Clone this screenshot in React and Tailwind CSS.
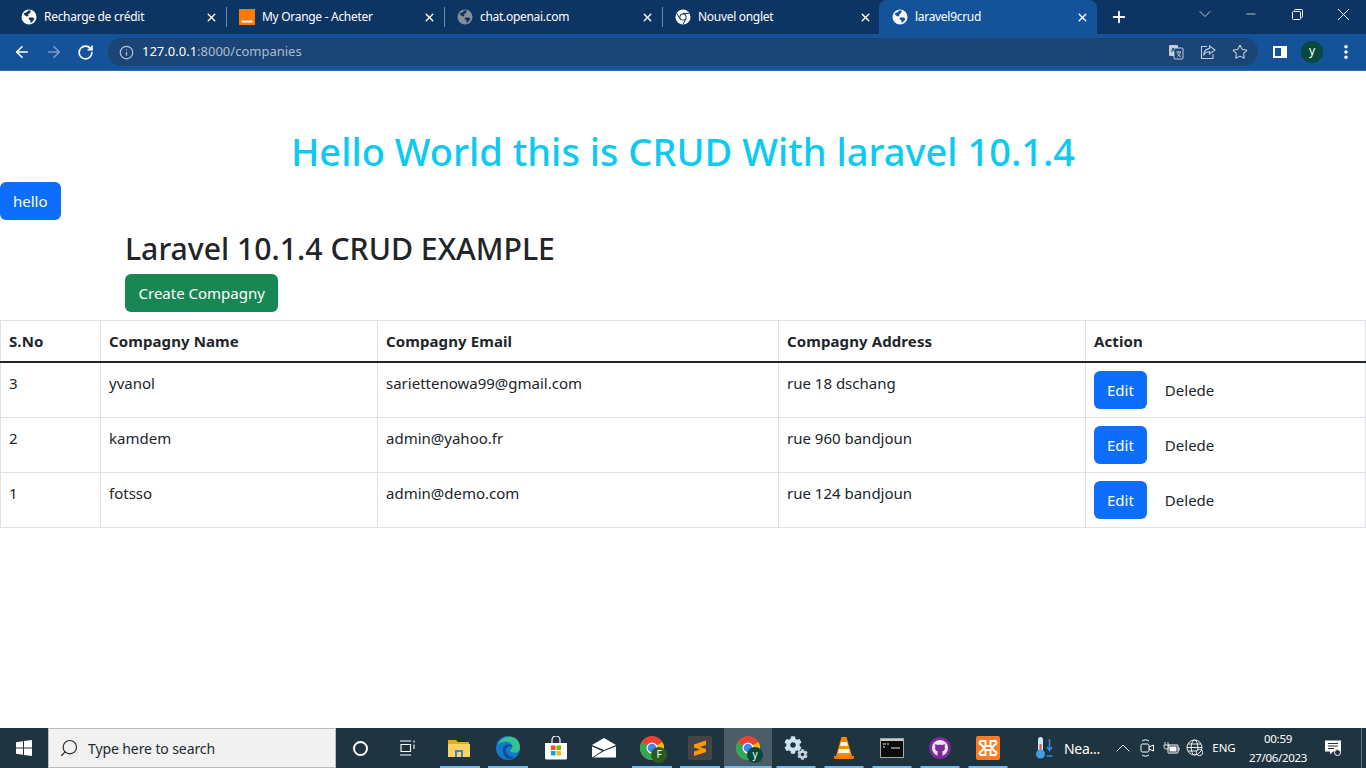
import { ArrowLeft, ArrowRight, RotateCw, Info, Star, X, Plus, ChevronDown, ChevronUp, Minus, EllipsisVertical, Search } from "lucide-react";
import { FaCog } from "react-icons/fa";

const font = "font-['Noto_Sans','Open_Sans',sans-serif]";

const Globe = ({ color = "#ffffff", hole = "#0d3563" }) => (
    <svg width="16" height="16" viewBox="0 0 16 16" className="shrink-0">
        <circle cx="8" cy="8" r="7.5" fill={color} />
        <path d="M2.5 4.5 L6 3 L7 1.5 L10 1.5 L9 4 L7 5.5 L7.5 7 L5.5 7.5 L3.5 6 Z" fill={hole} />
        <path d="M8 8.5 L12 8.5 L13.5 10 L11 13 L9.5 14.2 L9.5 11.5 L7.5 10 Z" fill={hole} />
    </svg>
);

const OrangeIcon = () => (
    <svg width="16" height="16" viewBox="0 0 16 16" className="shrink-0">
        <rect width="16" height="16" fill="#ff7900" />
        <rect x="2.5" y="11.5" width="11" height="2" fill="#ffffff" />
    </svg>
);

const ChromeMono = () => (
    <svg width="16" height="16" viewBox="0 0 16 16" className="shrink-0">
        <circle cx="8" cy="8" r="7.5" fill="#ffffff" />
        <circle cx="8" cy="8" r="3.6" fill="#0d3563" />
        <circle cx="8" cy="8" r="2.6" fill="#ffffff" />
        <path d="M8 4.4 L14.2 4.4 M4.9 9.8 L1.8 4.4 M11.1 9.8 L8 15.2" stroke="#0d3563" strokeWidth="1" />
    </svg>
);

const tabs = [
    { title: "Recharge de crédit", icon: <Globe /> },
    { title: "My Orange - Acheter", icon: <OrangeIcon /> },
    { title: "chat.openai.com", icon: <Globe color="#8a8f96" /> },
    { title: "Nouvel onglet", icon: <ChromeMono /> },
    { title: "laravel9crud", icon: <Globe hole="#14539a" />, active: true },
];

const companies = [
    { id: 3, name: "yvanol", email: "sariettenowa99@gmail.com", address: "rue 18 dschang" },
    { id: 2, name: "kamdem", email: "admin@yahoo.fr", address: "rue 960 bandjoun" },
    { id: 1, name: "fotsso", email: "admin@demo.com", address: "rue 124 bandjoun" },
];

const TabStrip = () => (
    <div className="h-[34px] bg-[#0d3563] flex pl-2 text-white">
        {tabs.map((tab, i) => (
            <div
                key={tab.title}
                className={`w-[218px] h-full flex items-center pl-[13px] pr-[7px] relative ${tab.active ? "bg-[#14539a] rounded-t-lg -ml-px" : ""}`}
            >
                {tab.icon}
                <span className="ml-[7px] text-[12px] tracking-[-0.3px] flex-1 truncate">{tab.title}</span>
                <X size={13} strokeWidth={2.6} className="shrink-0 mr-[1px]" />
                {i < 3 && <span className="absolute right-[-1px] top-[7px] h-[20px] w-px bg-[#6f8aa8]" />}
            </div>
        ))}
        <div className="w-11 flex items-center justify-center">
            <Plus size={18} strokeWidth={2.4} />
        </div>
        <div className="flex-1 flex justify-end items-start text-white">
            <div className="w-[46px] h-7 flex items-center justify-center"><ChevronDown size={20} strokeWidth={0.9} /></div>
            <div className="w-[46px] h-7 flex items-center justify-center"><Minus size={14} strokeWidth={1.2} /></div>
            <div className="w-[46px] h-7 flex items-center justify-center">
                <svg width="11" height="11" viewBox="0 0 11 11" fill="none" stroke="#fff">
                    <rect x="0.5" y="2.5" width="8" height="8" rx="1" />
                    <path d="M2.5 2.5 V1.5 a1 1 0 0 1 1 -1 H9.5 a1 1 0 0 1 1 1 V7.5 a1 1 0 0 1 -1 1 H8.5" />
                </svg>
            </div>
            <div className="w-[46px] h-7 flex items-center justify-center">
                <svg width="11" height="11" viewBox="0 0 11 11" stroke="#fff"><path d="M0 0 L11 11 M11 0 L0 11" /></svg>
            </div>
        </div>
    </div>
);

const Toolbar = () => (
    <div className="h-[37px] bg-[#14539a] flex pb-[4px] pt-1 text-white border-b border-[#2a6db5]">
        <div className="w-[108px] flex items-center pl-[13px] gap-[14px]">
            <ArrowLeft size={18} strokeWidth={2.2} />
            <ArrowRight size={18} strokeWidth={2.2} className="text-[#7f9fc6]" />
            <RotateCw size={17} strokeWidth={2.4} />
        </div>
        <div className="w-[1150px] bg-[#1a4576] rounded-full flex items-center pl-[11px] pr-[10px]">
            <Info size={15} className="text-[#b9c6d6]" />
            <span className="ml-[8px] text-[13px]">
                127.0.0.1<span className="text-[#aebccd]">:8000/companies</span>
            </span>
            <div className="ml-auto flex items-center gap-4 text-[#c3ccd7]">
                <svg width="16" height="16" viewBox="0 0 16 16">
                    <rect x="1" y="1" width="9" height="11" rx="1" fill="#c3ccd7" />
                    <rect x="6" y="4" width="9" height="11" rx="1" fill="#1a4576" stroke="#c3ccd7" />
                    <path d="M3.5 8 L5 4 L6.5 8" stroke="#1a4576" fill="none" />
                    <path d="M8.5 8 H13 M10.500 7 V8 M9.500 12.500 C11 11.500 12 10 12.500 8 M9.500 9 C10 10.500 11 12 13 12.500" stroke="#c3ccd7" fill="none" />
                </svg>
                <svg width="16" height="16" viewBox="0 0 16 16" fill="none" stroke="currentColor" strokeWidth="1.1">
                    <path d="M7 2.500 H1.500 V14.500 H13 V10" />
                    <path d="M9.500 2 L15 6 L9.500 10 V7.700 C7 7.700 5 8.500 3.500 11.500 C4 7.500 6.500 4.800 9.500 4.400 Z" />
                </svg>
                <Star size={16} strokeWidth={1.6} />
            </div>
        </div>
        <div className="flex-1 flex items-center pl-[15px] gap-[14px]">
            <svg width="14" height="14" viewBox="0 0 14 14">
                <rect x="0" y="1" width="14" height="12" fill="#fff" />
                <rect x="2" y="3" width="6" height="8" fill="#14539a" />
            </svg>
            <div className="w-[22px] h-[22px] rounded-full bg-[#064a3d] flex items-center justify-center text-[12px] leading-none pb-[3px]">y</div>
            <EllipsisVertical size={18} strokeWidth={2.8} />
        </div>
    </div>
);

const TaskIcons = [
    {
        key: "explorer",
        line: "w-[40px]",
        el: (
            <svg width="24" height="22" viewBox="0 0 24 22" className="-ml-[2px]">
                <path d="M1 3 H9 L11 5 H22 V8 H1 Z" fill="#e5a823" />
                <rect x="1" y="7" width="22" height="13" fill="#fdd261" />
                <rect x="8" y="13" width="8" height="7" fill="#2f88d0" />
                <rect x="10" y="15" width="4" height="5" fill="#fdd261" />
            </svg>
        ),
    },
    {
        key: "edge",
        line: "w-[40px]",
        el: (
            <svg width="24" height="24" viewBox="0 0 24 24">
                <circle cx="12" cy="12" r="12" fill="#1379c9" />
                <path d="M2 9 C4 1 13 -1 19 2 C24 5 25 11 23 15 C20 18 15 17 14 14 C18 12 17 7 12 6 C7 5 3 7 2 9 Z" fill="#35c38f" />
                <path d="M7 13 C7 8 15 7 16.500 11 C15 10 11 10 10 13 C9 17 13 21 18 21 C12 26 6 20 7 13 Z" fill="#0c4f9a" />
            </svg>
        ),
    },
    {
        key: "store",
        line: "",
        el: (
            <svg width="24" height="24" viewBox="0 0 24 24">
                <path d="M8 7 V4 a4 4 0 0 1 8 0 V7" fill="none" stroke="#fff" strokeWidth="1.200" />
                <path d="M1 7 H23 V22 a1.500 1.500 0 0 1 -1.500 1.500 H2.500 A1.500 1.500 0 0 1 1 22 Z" fill="#fff" />
                <rect x="7" y="9.500" width="4.500" height="4.500" fill="#f25022" />
                <rect x="12.500" y="9.500" width="4.500" height="4.500" fill="#7fba00" />
                <rect x="7" y="15" width="4.500" height="4.500" fill="#00a4ef" />
                <rect x="12.500" y="15" width="4.500" height="4.500" fill="#ffb900" />
            </svg>
        ),
    },
    {
        key: "mail",
        line: "",
        el: (
            <svg width="24" height="20" viewBox="0 0 24 20">
                <path d="M0 7 L12 0 L24 7 L12 12 Z" fill="#fff" />
                <path d="M0 8.500 L10 13 L0 19.500 Z M24 8.500 V19.500 H1.500 L12 13 Z" fill="#fff" />
            </svg>
        ),
    },
    { key: "chromeF", line: "w-[40px]", el: <ChromeBadge letter="F" badge="#2a5d1c" /> },
    {
        key: "sublime",
        line: "w-[40px]",
        el: (
            <svg width="24" height="24" viewBox="0 0 24 24">
                <rect width="24" height="24" rx="2" fill="#454545" />
                <path d="M6 8.500 L18 4.500 V9 L12 11 L18 13 V16 L6 20 V15.500 L12 13.500 L6 11.500 Z" fill="#ff9800" />
            </svg>
        ),
    },
    { key: "chromeY", line: "w-[47px]", active: true, el: <ChromeBadge letter="y" badge="#064a3d" /> },
    {
        key: "gears",
        line: "w-[39px]",
        el: (
            <div className="relative w-6 h-6">
                <FaCog size={18} className="absolute left-0 top-0 text-[#cfe2f1]" />
                <FaCog size={11} className="absolute right-0 bottom-0 text-[#c4d2dc]" />
            </div>
        ),
    },
    {
        key: "vlc",
        line: "w-[39px]",
        el: (
            <svg width="22" height="24" viewBox="0 0 22 24">
                <path d="M8.500 1 H13.500 L19 20 H3 Z" fill="#ff8800" />
                <path d="M8 6 H14 L15 10 H7 Z M6 13 H16 L17 17 H5 Z" fill="#f4f4f4" />
                <path d="M1 20 H21 V21.500 A1.500 1.500 0 0 1 19.500 23 H2.500 A1.500 1.500 0 0 1 1 21.500 Z" fill="#f57c00" />
            </svg>
        ),
    },
    {
        key: "cmd",
        line: "w-[39px]",
        el: (
            <svg width="24" height="20" viewBox="0 0 24 20">
                <rect x="0.500" y="0.500" width="23" height="19" fill="#0c0c0c" stroke="#a8a8a8" />
                <rect x="1" y="1" width="22" height="2" fill="#c9c9c9" />
                <path d="M3 6 H6 M7 6 H9 M3 9 H5 M11 10 H20" stroke="#e8e8e8" />
            </svg>
        ),
    },
    {
        key: "github",
        line: "w-[39px]",
        el: (
            <svg width="24" height="24" viewBox="0 0 24 24">
                <circle cx="12" cy="12" r="11" fill="#7b2a9a" />
                <circle cx="12" cy="12" r="8" fill="#f0e6f4" />
                <path d="M7.500 8 L9.500 9 C11 8.600 13 8.600 14.500 9 L16.500 8 C17 9 17 10 16.700 10.700 C17.500 13 16.500 15 14 15.500 C14.500 16 14.600 17 14.500 20 H9.500 C9.400 17 9.500 16 10 15.500 C7.500 15 6.500 13 7.300 10.700 C7 10 7 9 7.500 8 Z" fill="#7b2a9a" />
            </svg>
        ),
    },
    {
        key: "xampp",
        line: "w-[39px]",
        el: (
            <svg width="24" height="24" viewBox="0 0 24 24">
                <rect width="24" height="24" rx="2" fill="#fb7a24" />
                <path d="M6 5 H9.500 V10 H14.500 V5 H18 A1.500 1.500 0 0 1 19 8.500 L15.500 12 L19 15.500 A1.500 1.500 0 0 1 18 19 H14.500 V14 H9.500 V19 H6 A1.500 1.500 0 0 1 5 15.500 L8.500 12 L5 8.500 A1.500 1.500 0 0 1 6 5 Z" fill="none" stroke="#fff" strokeWidth="2" />
            </svg>
        ),
    },
];

function ChromeBadge({ letter, badge }) {
    return (
        <div className="relative w-6 h-6">
            <svg width="24" height="24" viewBox="0 0 24 24">
                <circle cx="12" cy="12" r="12" fill="#ea4335" />
                <path d="M12 12 L1.600 6 A12 12 0 0 0 12 24 Z" fill="#34a853" />
                <path d="M12 12 L12 24 A12 12 0 0 0 22.400 6 Z" fill="#fbbc05" />
                <circle cx="12" cy="12" r="5.500" fill="#fff" />
                <circle cx="12" cy="12" r="4.300" fill="#4285f4" />
            </svg>
            <span className="absolute -right-[3px] -bottom-[3px] w-[16px] h-[16px] rounded-full text-white text-[10px] leading-[15px] text-center" style={{ background: badge }}>{letter}</span>
        </div>
    );
}

const Taskbar = () => (
    <div className="h-10 bg-[#1f3441] flex text-white shrink-0">
        <div className="w-12 flex items-center justify-center">
            <svg width="16" height="16" viewBox="0 0 16 16" fill="#fff">
                <path d="M0 2.300 L7 1.300 V7.500 H0 Z M8 1.100 L16 0 V7.500 H8 Z M0 8.500 H7 V14.700 L0 13.700 Z M8 8.500 H16 V16 L8 14.900 Z" />
            </svg>
        </div>
        <div className="w-[288px] bg-[#f1f1f1] border border-[#b9bdc0] flex items-center pl-[10px] text-[#1d2a33]">
            <Search size={20} strokeWidth={1.4} className="-scale-x-100" />
            <span className="ml-[9px] text-[14px] tracking-[-0.1px]">Type here to search</span>
        </div>
        <div className="w-12 flex items-center justify-center">
            <span className="w-[15px] h-[15px] rounded-full border-2 border-white" />
        </div>
        <div className="w-[52px] flex items-center justify-center pr-1">
            <svg width="16" height="16" viewBox="0 0 16 16" fill="none" stroke="#fff" strokeWidth="1.100">
                <path d="M0 1 H11 M0 15 H11 M1 4.500 H10.500 V11.500 H1 Z M14 0.500 V2.500 M14 4.500 V9" />
            </svg>
        </div>
        {TaskIcons.map((item) => (
            <div key={item.key} className={`w-12 relative flex items-center justify-center ${item.active ? "bg-[#4a5c66]" : ""}`}>
                {item.el}
                {item.line && <span className={`absolute bottom-0 left-1/2 -translate-x-1/2 h-[2px] bg-[#76b9ed] ${item.line}`} />}
            </div>
        ))}
        <div className="w-[23px]" />
        <div className="flex items-center w-[76px]">
            <svg width="18" height="24" viewBox="0 0 17 24" className="shrink-0">
                <rect x="2.500" y="1" width="5" height="15" rx="2.500" fill="#cfe6f7" />
                <rect x="4" y="8" width="2" height="9" fill="#e8553d" />
                <circle cx="5" cy="18" r="4.500" fill="#3f9fe0" />
                <path d="M14 3 V14 M11.500 11 L14 14.500 L16.500 11 M11 20 H17" stroke="#2d8fe0" strokeWidth="1.500" fill="none" />
            </svg>
            <span className="ml-[11px] text-[14px] tracking-[-0.3px] whitespace-nowrap">Nea...</span>
        </div>
        <div className="w-6 flex items-center justify-center"><ChevronUp size={24} strokeWidth={1} /></div>
        <div className="w-6 flex items-center justify-center">
            <svg width="15" height="18" viewBox="0 0 15 18" fill="none" stroke="#fff">
                <rect x="1" y="5" width="8" height="8" rx="1.500" />
                <path d="M9 8 L13.500 6 V12 L9 10 M2 2 C4 0.500 7 0.500 9 2 M2 16 C4 17.500 7 17.500 9 16" />
            </svg>
        </div>
        <div className="w-6 flex items-center justify-center">
            <svg width="17" height="14" viewBox="0 0 17 14" fill="#fff">
                <path d="M2 1 V4 M5 1 V4 M1 4 H6 V6 A2 2 0 0 1 4 8 H3 A2 2 0 0 1 1 6 Z" stroke="#fff" strokeWidth="0.800" fill="none" />
                <rect x="5" y="4" width="10" height="8" rx="0.500" fill="none" stroke="#fff" />
                <rect x="6.500" y="5.500" width="7" height="5" />
                <rect x="15.500" y="6.500" width="1" height="3" />
            </svg>
        </div>
        <div className="w-6 flex items-center justify-center">
            <svg width="18" height="18" viewBox="0 0 18 18" fill="none" stroke="#fff" strokeWidth="0.900">
                <circle cx="8.500" cy="8.500" r="7.500" />
                <ellipse cx="8.500" cy="8.500" rx="3.300" ry="7.500" />
                <path d="M1 8.500 H16 M2 5 H15 M2 12 H15" />
                <circle cx="13.500" cy="13.500" r="3.200" fill="#1f3441" />
                <path d="M11.300 15.700 L15.700 11.300" />
            </svg>
        </div>
        <div className="w-[34px] flex items-center justify-center text-[11.5px]">ENG</div>
        <div className="w-[74px] flex flex-col items-center justify-center text-[11.5px] leading-[19px] tracking-[-0.3px] pb-px">
            <span>00:59</span>
            <span>27/06/2023</span>
        </div>
        <div className="w-9 flex items-center justify-center">
            <svg width="16" height="16" viewBox="0 0 16 16">
                <path d="M0 0.500 H16 V11.500 H8 L5 14.500 V11.500 H0 Z" fill="#fff" />
                <path d="M3 3.500 H13 M3 6 H13 M3 8.500 H9" stroke="#1f3441" />
                <circle cx="12.500" cy="12.500" r="3" fill="#1f3441" stroke="#fff" />
            </svg>
        </div>
        <div className="flex-1 border-l border-[#5d6e79] ml-[10px]" />
    </div>
);

const Page = () => (
    <div className={`flex-1 bg-white text-[#212529] text-[15px] ${font}`}>
        <h1 className="pt-[56px] text-center text-[38px] leading-[48px] font-medium text-[#0dcaf0]">
            Hello World this is CRUD With laravel 10.1.4
        </h1>
        <button className="mt-[7px] block h-[38px] px-[13px] bg-[#0d6efd] text-white rounded-md">hello</button>
        <div className="pl-[125px] mt-[8px]">
            <h2 className="text-[30.2px] leading-[42px] font-medium">Laravel 10.1.4 CRUD EXAMPLE</h2>
            <button className="mt-[4px] block h-[38px] px-[13.5px] bg-[#198754] text-white rounded-md">Create Compagny</button>
        </div>
        <table className="mt-2 w-full table-fixed border-collapse border border-[#dee2e6]">
            <colgroup>
                <col className="w-[100px]" />
                <col className="w-[277px]" />
                <col className="w-[401px]" />
                <col className="w-[307px]" />
                <col />
            </colgroup>
            <thead>
                <tr className="h-[41px] border-b-2 border-b-[#212529]">
                    {["S.No", "Compagny Name", "Compagny Email", "Compagny Address", "Action"].map((h) => (
                        <th key={h} className="border-x border-[#dee2e6] px-2 text-left font-bold tracking-[0.1px]">{h}</th>
                    ))}
                </tr>
            </thead>
            <tbody>
                {companies.map((c, i) => (
                    <tr key={c.id} className={`border-b border-[#dee2e6] ${i === 0 ? "h-[56px]" : "h-[55px]"}`}>
                        <td className="border-x border-[#dee2e6] px-2 pt-2 leading-6 align-top">{c.id}</td>
                        <td className="border-x border-[#dee2e6] px-2 pt-2 leading-6 align-top">{c.name}</td>
                        <td className="border-x border-[#dee2e6] px-2 pt-2 leading-6 align-top">{c.email}</td>
                        <td className="border-x border-[#dee2e6] px-2 pt-2 leading-6 align-top">{c.address}</td>
                        <td className="border-x border-[#dee2e6] px-2 align-middle">
                            <div className="flex items-center">
                                <button className="h-[38px] px-[13px] bg-[#0d6efd] text-white rounded-md">Edit</button>
                                <button className="h-[38px] px-[13px] ml-[5px]">Delede</button>
                            </div>
                        </td>
                    </tr>
                ))}
            </tbody>
        </table>
    </div>
);

const App = () => {
    return (
        <div className={`h-screen w-full flex flex-col overflow-hidden ${font}`}>
            <TabStrip />
            <Toolbar />
            <Page />
            <Taskbar />
        </div>
    );
};

export default App;
